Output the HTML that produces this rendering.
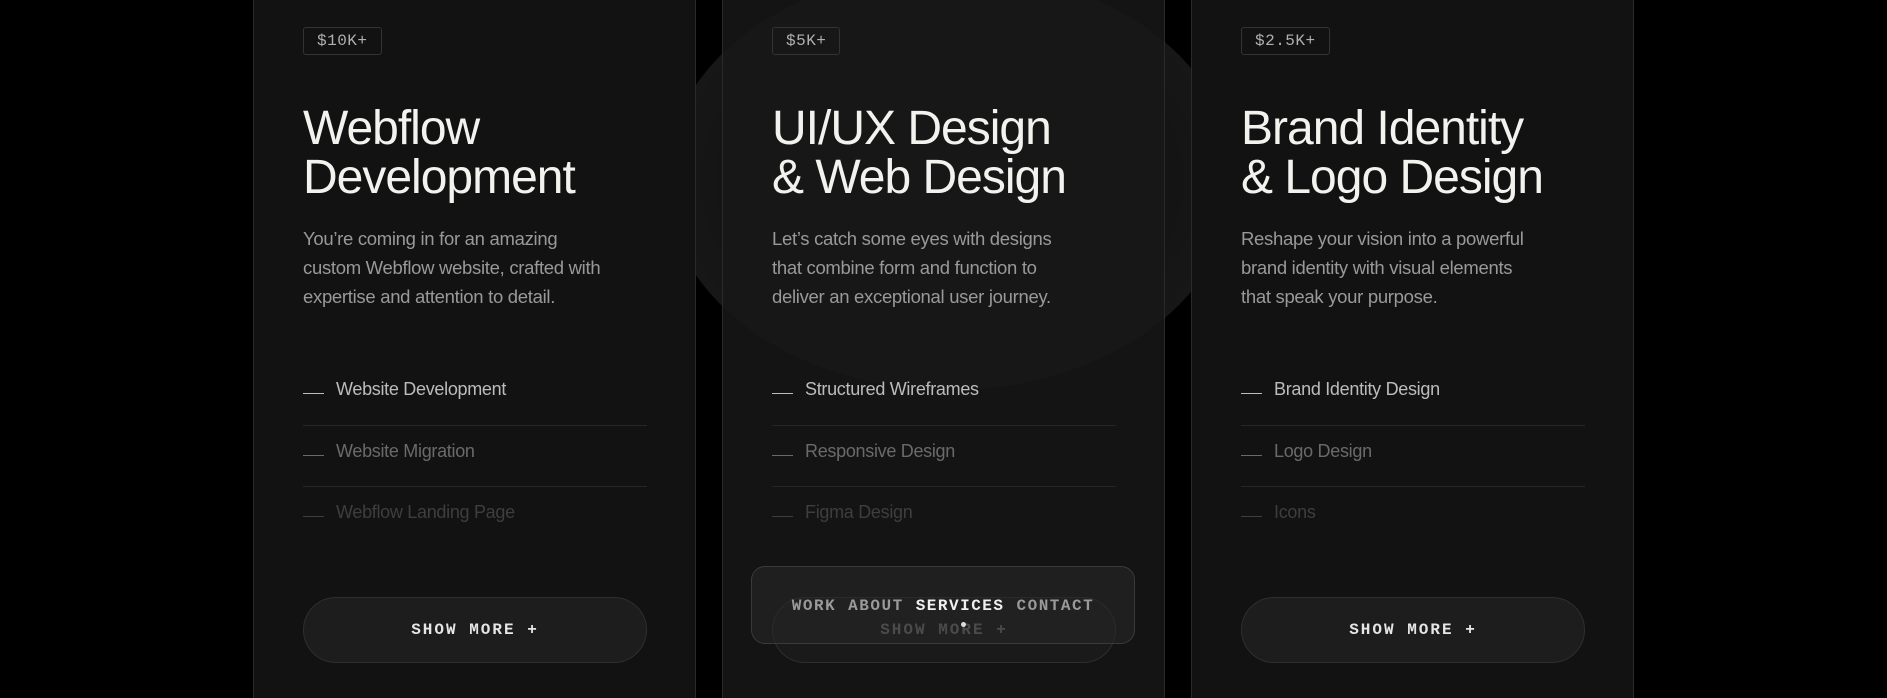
<!DOCTYPE html>
<html><head><style>
*{margin:0;padding:0;box-sizing:border-box}
body{width:1887px;height:669px;background:#000;overflow:hidden;position:relative;font-family:"Liberation Sans",sans-serif}
.card{position:absolute;top:-2px;width:443px;height:700px;background:#121212;border:1px solid #2a2a2a;border-top:none;border-bottom:none}
.swirl{position:absolute;left:665px;top:-30px;width:570px;height:420px;border-radius:50%;background:radial-gradient(ellipse at 50% 50%,#151515 0%,#141414 55%,#171717 70%,#0a0a0a 82%,#000 100%)}
.badge{position:absolute;left:49px;top:29px;height:28px;padding:0 13px;border:1px solid #333;border-radius:3px;font-family:"Liberation Mono",monospace;font-size:16px;line-height:26px;color:#b0b0b0;letter-spacing:.5px}
h2{position:absolute;left:49px;top:106px;font-weight:400;font-size:48px;line-height:49px;color:#f2f2ee;letter-spacing:-1px}
p{position:absolute;left:49px;top:226px;width:300px;font-size:18.5px;line-height:29px;color:#999;letter-spacing:-.3px}
.li{position:absolute;left:49px;width:344px;height:1px;background:#262626}
.it{position:absolute;left:49px;font-size:18px;letter-spacing:-.3px}
.it:before{content:"";display:inline-block;width:21px;height:1px;background:currentColor;vertical-align:middle;margin-right:12px;margin-top:6px}
.btn{position:absolute;left:49px;top:599px;width:344px;height:66px;border-radius:33px;background:#1d1d1d;border:1px solid #2e2e2e;text-align:center;line-height:64px;font-family:"Liberation Mono",monospace;font-size:16px;font-weight:bold;letter-spacing:2px;color:#e6e6e6}
.nav{position:absolute;left:751px;top:566px;width:384px;height:78px;border-radius:14px;border:1px solid #3a3a3a;background:rgba(40,40,40,.55);text-align:center;font-family:"Liberation Mono",monospace;font-size:16px;font-weight:bold;letter-spacing:1.5px;color:#9a9a9a;padding-top:30px}
.nav span{margin:0 6px}
</style></head><body>
<div class="swirl"></div>
<div class="card" style="left:253px">
<div class="badge">$10K+</div>
<h2>Webflow<br>Development</h2>
<p>You’re coming in for an amazing custom Webflow website, crafted with expertise and attention to detail.</p>
<div class="it" style="top:381px;color:#bcbcbc">Website Development</div>
<div class="li" style="top:427px"></div>
<div class="it" style="top:443px;color:#6a6a6a">Website Migration</div>
<div class="li" style="top:488px"></div>
<div class="it" style="top:504px;color:#3e3e3e">Webflow Landing Page</div>
<div class="btn">SHOW MORE +</div>
</div>
<div class="card" style="left:722px;background:rgba(24,24,24,.85)">
<div class="badge">$5K+</div>
<h2>UI/UX Design<br>&amp; Web Design</h2>
<p>Let’s catch some eyes with designs that combine form and function to deliver an exceptional user journey.</p>
<div class="it" style="top:381px;color:#bcbcbc">Structured Wireframes</div>
<div class="li" style="top:427px"></div>
<div class="it" style="top:443px;color:#6a6a6a">Responsive Design</div>
<div class="li" style="top:488px"></div>
<div class="it" style="top:504px;color:#3e3e3e">Figma Design</div>
<div class="btn" style="color:#777;background:#1a1a1a">SHOW MORE +</div>
</div>
<div class="card" style="left:1191px">
<div class="badge">$2.5K+</div>
<h2>Brand Identity<br>&amp; Logo Design</h2>
<p>Reshape your vision into a powerful brand identity with visual elements that speak your purpose.</p>
<div class="it" style="top:381px;color:#bcbcbc">Brand Identity Design</div>
<div class="li" style="top:427px"></div>
<div class="it" style="top:443px;color:#6a6a6a">Logo Design</div>
<div class="li" style="top:488px"></div>
<div class="it" style="top:504px;color:#3e3e3e">Icons</div>
<div class="btn">SHOW MORE +</div>
</div>
<div class="nav"><span>WORK</span><span>ABOUT</span><span style="color:#f0f0f0">SERVICES</span><span>CONTACT</span></div>
<div style="position:absolute;left:961px;top:622px;width:5px;height:5px;border-radius:50%;background:#ddd"></div>
</body></html>
